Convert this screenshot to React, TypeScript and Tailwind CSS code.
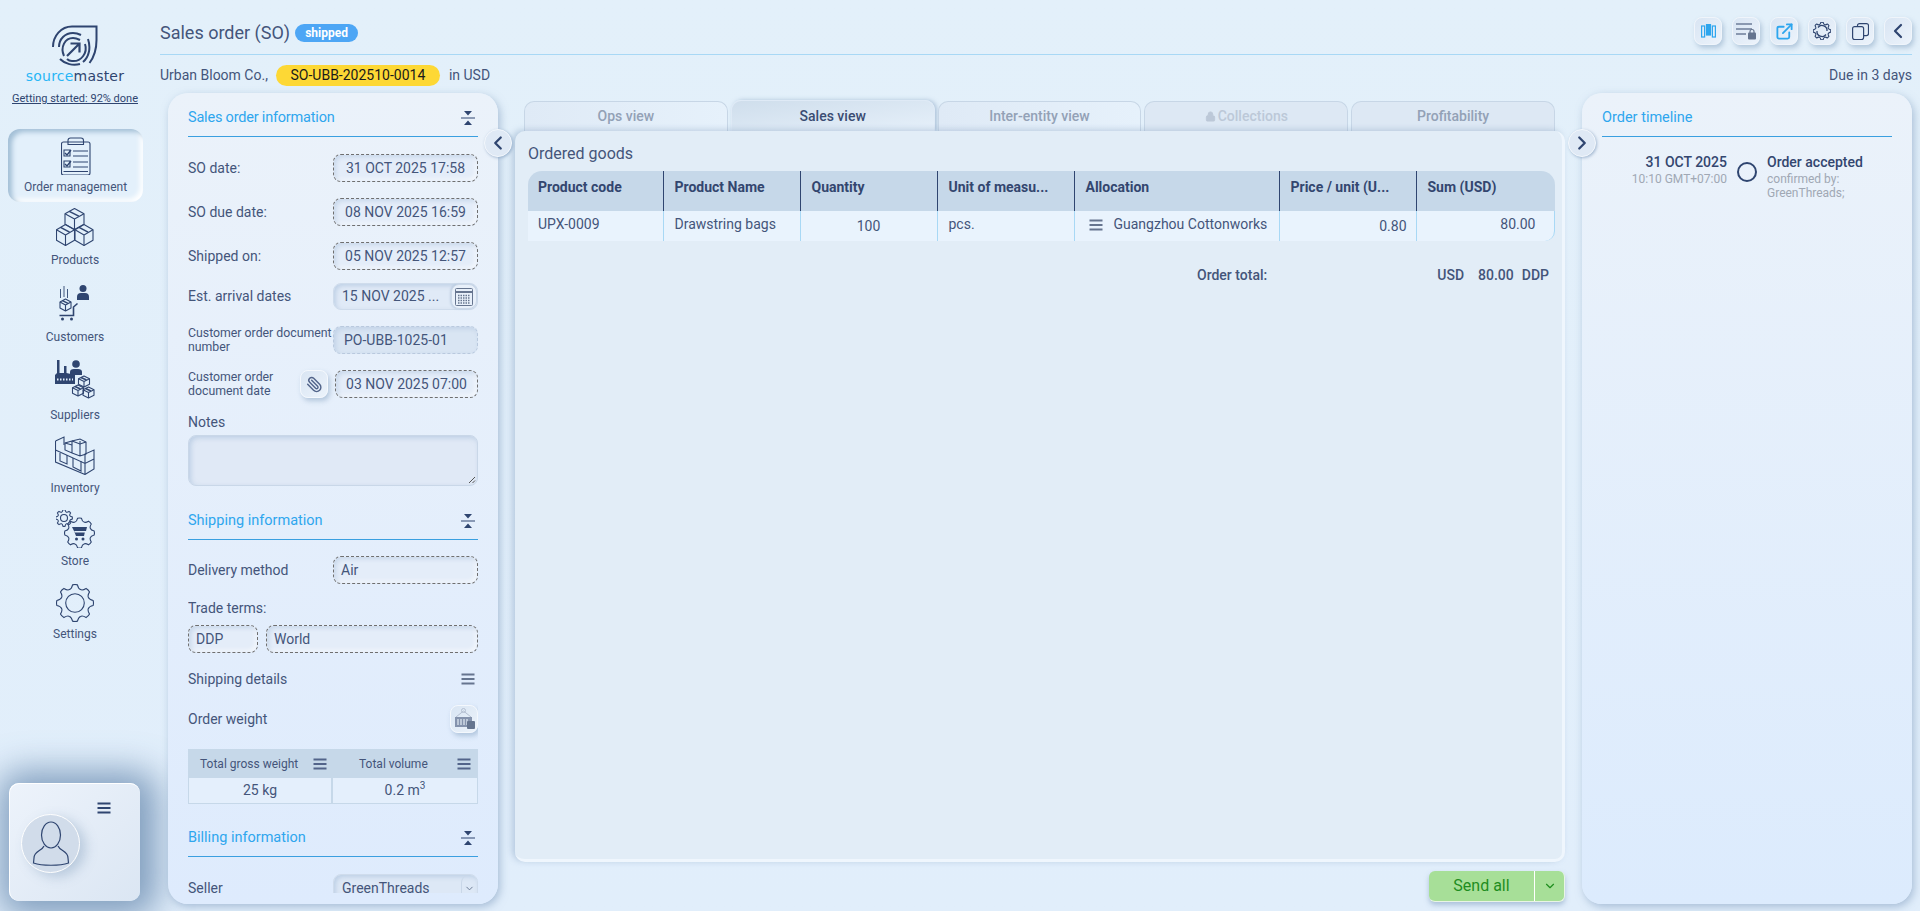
import React from "react";
import { ChevronDown, ChevronLeft, ChevronRight, ExternalLink, Lock, Paperclip } from "lucide-react";

const INK = "#2f4570";

function gearPath(cx: number, cy: number, r: number, R: number, n: number) {
  const step = (Math.PI * 2) / n;
  let d = "";
  for (let i = 0; i < n; i++) {
    const a = i * step - Math.PI / 2;
    const p = (ang: number, rad: number) =>
      `${(cx + Math.cos(ang) * rad).toFixed(2)} ${(cy + Math.sin(ang) * rad).toFixed(2)}`;
    d += `${i === 0 ? "M" : "L"}${p(a - step * 0.5, r)} `;
    d += `Q${p(a - step * 0.3, r)} ${p(a - step * 0.17, R)} `;
    d += `Q${p(a, R * 1.03)} ${p(a + step * 0.17, R)} `;
    d += `Q${p(a + step * 0.3, r)} ${p(a + step * 0.5, r)} `;
  }
  return d + "Z";
}

// isometric carton, cx is the middle and y the top tip
const IsoBox = ({ cx, y, w, h }: { cx: number; y: number; w: number; h: number }) => {
  const q = h / 4;
  return (
    <g fill="none" stroke={INK} strokeWidth="1.1" strokeLinejoin="round">
      <path d={`M${cx} ${y}L${cx + w} ${y + q}V${y + h - q}L${cx} ${y + h}L${cx - w} ${y + h - q}V${y + q}Z`} />
      <path d={`M${cx - w} ${y + q}L${cx} ${y + 2 * q}L${cx + w} ${y + q}M${cx} ${y + 2 * q}V${y + h}`} />
      <path d={`M${cx - w * 0.55} ${y + q * 0.55}L${cx + w * 0.45} ${y + q * 1.45}`} strokeWidth="1.6" />
    </g>
  );
};

const Burger = ({ className = "", color = "#66758f" }: { className?: string; color?: string }) => (
  <svg width="14" height="12" viewBox="0 0 14 12" className={className}>
    <path d="M0.5 1.5H13.5M0.5 6H13.5M0.5 10.5H13.5" stroke={color} strokeWidth="2" />
  </svg>
);

const CollapseIcon = () => (
  <svg width="14" height="14" viewBox="0 0 14 14">
    <path d="M3 0H11L7 4.5ZM0 6.5H14V7.5H0ZM7 9.5L11 14H3Z" fill={INK} />
  </svg>
);

const Logo = () => (
  <svg width="46" height="41" viewBox="0 0 46 41" fill="none" stroke={INK} strokeWidth="2">
    <path d="M1 22C1 11 9 1.500 20 1.500H44.500V15C44.500 24 42 32 37.500 38" />
    <path d="M7 22C7 14 13 8 21 8C24 8 27 9 29 10" />
    <path d="M36 14C39 23 37 32 31 37M8 34C13 39 21 41 28 39" />
    <path d="M12 31C8 22 13 13 21 13C24 13 26 14 28 15M33 19C36 28 29 37 20 36C18 36 16 35 15 34" />
    <path d="M15 31L27 19M18.500 18.500H27.500V27.500" strokeWidth="2.200" />
  </svg>
);

const ClipboardIcon = () => (
  <svg width="30" height="38" viewBox="0 0 30 38" fill="none" stroke={INK} strokeWidth="1.100">
    <rect x="0.500" y="5" width="28.500" height="33" rx="2" />
    <path d="M7 7.500V3.500Q7 1 9.500 1H20Q22.500 1 22.500 3.500V7.500Z" />
    <path d="M3 13H9V19H3ZM3 24H9V30H3ZM12 14H27M12 19H27M12 25H27M12 30H27M2.500 34.500H27" />
    <path d="M4 16L6 18L10 13M4 27L6 29L10 24" strokeWidth="1.400" />
  </svg>
);

const ProductsIcon = () => (
  <svg width="38" height="38" viewBox="0 0 38 38">
    <IsoBox cx={18.5} y={0.5} w={9.5} h={21} />
    <IsoBox cx={9.5} y={16.500} w={9} h={21} />
    <IsoBox cx={28} y={16.500} w={9} h={21} />
  </svg>
);

const CustomersIcon = () => (
  <svg width="31" height="37" viewBox="0 0 31 37" fill="none" stroke={INK}>
    <circle cx="24" cy="3.500" r="3.500" fill={INK} stroke="none" />
    <path d="M18 15V12Q18 8 22 8H26Q30 8 30 12V15Z" fill={INK} stroke="none" />
    <path d="M1.500 4V13M5 1V12M8.500 4V13" strokeWidth="0.900" />
    <IsoBox cx={6.500} y={14} w={5.500} h={12} />
    <path d="M18.500 18.500L14.500 22V30.500H0.500" strokeWidth="1.600" />
    <circle cx="3.500" cy="34" r="1.500" fill={INK} stroke="none" />
    <circle cx="12.500" cy="34" r="1.500" fill={INK} stroke="none" />
  </svg>
);

const SuppliersIcon = () => (
  <svg width="40" height="39" viewBox="0 0 40 39">
    <path d="M0 24V15L2 13V0H4.500V13H9V6H11.500V13L20 15V24Z" fill={INK} />
    <path d="M2 19.500H18" stroke="#e3f0fb" strokeWidth="2" strokeDasharray="1.500 1.500" />
    <circle cx="21" cy="4" r="3.800" fill={INK} />
    <path d="M15 15V12Q15 9 19 9H23Q27 9 27 12V15Z" fill={INK} />
    <IsoBox cx={29} y={16} w={5.500} h={11} />
    <IsoBox cx={23} y={25} w={5.500} h={11} />
    <IsoBox cx={33.500} y={27} w={5.500} h={11} />
  </svg>
);

const InventoryIcon = () => (
  <svg width="40" height="39" viewBox="0 0 40 39" fill="none" stroke={INK} strokeWidth="1.100">
    <path d="M0.500 5V26L30 38.500L39 33V14L30 18V38.500M0.500 5L9 1V9M0.500 14L30 27.500L39 23" />
    <path d="M10 7L17 5V17L10 14ZM17 5L25 3L31 6V18L25 20L17 17M25 5V20" />
    <path d="M5 17V25L12 28V19M18 22V31L26 35V25" />
    <path d="M10 7L17 9M17 5L25 8L31 6" />
  </svg>
);

const StoreIcon = () => (
  <svg width="39" height="38" viewBox="0 0 39 38" fill="none" stroke={INK} strokeWidth="1.100">
    <path d={gearPath(8, 8, 6.300, 8.300, 8)} />
    <circle cx="8" cy="8" r="3.500" />
    <path d={gearPath(23.500, 23, 11.800, 14.800, 8)} />
    <path d="M16 17H31L30 21H18ZM19 22.500H28.800L28 26H20L16.500 17" fill={INK} stroke="none" />
    <circle cx="20.500" cy="29" r="1.500" fill={INK} stroke="none" />
    <circle cx="27" cy="29" r="1.500" fill={INK} stroke="none" />
  </svg>
);

const SettingsIcon = () => (
  <svg width="38" height="38" viewBox="0 0 38 38" fill="none" stroke={INK} strokeWidth="1.100">
    <path d={gearPath(19, 19, 14.500, 18.300, 8)} />
    <circle cx="19" cy="19" r="9.300" />
  </svg>
);

const nav = [
  { label: "Products", icon: <ProductsIcon />, box: "mt-[6px]", text: "mt-[6px]" },
  { label: "Customers", icon: <CustomersIcon />, box: "mt-[17px]", text: "mt-[7px]" },
  { label: "Suppliers", icon: <SuppliersIcon />, box: "mt-[15px]", text: "mt-[8px]" },
  { label: "Inventory", icon: <InventoryIcon />, box: "mt-[13px]", text: "mt-[5px]" },
  { label: "Store", icon: <StoreIcon />, box: "mt-[14px]", text: "mt-[5px]" },
  { label: "Settings", icon: <SettingsIcon />, box: "mt-[15px]", text: "mt-[4px]" },
];

const Sidebar = () => (
  <aside className="relative w-[160px] shrink-0 h-full">
    <div className="flex flex-col items-center pr-[10px]">
      <div className="mt-[25px] h-[41px]">
        <Logo />
      </div>
      <div className="mt-[1px] font-['DejaVu_Sans',sans-serif] text-[14px] leading-[18px] font-medium tracking-[0.2px]">
        <span className="text-[#29b6f6]">source</span>
        <span className="text-[#2f4570]">master</span>
      </div>
      <a className="mt-[6px] text-[11px] leading-[16px] text-[#2f4570] underline whitespace-nowrap">
        Getting started: 92% done
      </a>
    </div>
    <div className="mt-[22px] ml-[8px] w-[135px] h-[73px] rounded-[12px] flex flex-col items-center pt-[8px] bg-[#e3f0fb] shadow-[inset_4px_3px_5px_#a3bfd6,inset_-3px_-3px_5px_#ffffff]">
      <ClipboardIcon />
      <div className="mt-[4px] text-[12px] leading-[16px] text-[#44557a] whitespace-nowrap">Order management</div>
    </div>
    <nav className="flex flex-col items-center pr-[10px]">
      {nav.map((n) => (
        <div key={n.label} className={`flex flex-col items-center ${n.box}`}>
          {n.icon}
          <div className={`text-[12px] leading-[16px] text-[#44557a] ${n.text}`}>{n.label}</div>
        </div>
      ))}
    </nav>
    <div className="absolute left-[9px] top-[783px] w-[131px] h-[118px] rounded-[10px] border-t border-l border-white bg-linear-to-br from-[#edf3fb] to-[#dbe6f3] shadow-[4px_2px_34px_14px_rgba(90,125,165,0.7)]">
      <Burger className="absolute left-[87px] top-[18px]" color={INK} />
      <div className="absolute left-[11px] top-[30px] w-[59px] h-[59px] rounded-full bg-[#d1dcea] border border-white flex items-center justify-center shadow-[6px_4px_12px_rgba(110,140,175,0.35)]">
        <svg width="38" height="45" viewBox="0 0 38 45" fill="none" stroke={INK} strokeWidth="1.200">
          <ellipse cx="19" cy="14" rx="9.500" ry="13" />
          <path d="M12 25C10 30 2 30 2 37L1.500 42C10 45 28 45 36.500 42L36 37C36 30 28 30 26 25" />
        </svg>
      </div>
    </div>
  </aside>
);

const SectionHead = ({ title, icon = true, tight = false }: { title: string; icon?: boolean; tight?: boolean }) => (
  <div className="flex items-center justify-between h-[36px] pb-[2px] border-b border-[#3a9fe0] pr-[3px]">
    <span className={`text-[14.500px] text-[#2ea6ee] ${tight ? "tracking-[-0.2px]" : ""}`}>{title}</span>
    {icon && <CollapseIcon />}
  </div>
);

const Dashed = ({ children, className = "" }: { children: React.ReactNode; className?: string }) => (
  <div
    className={`h-[28px] flex items-center rounded-[8px] border border-dashed border-[#6f6f6f] text-[14px] text-[#44557a] bg-[#e4edf9] shadow-[inset_2px_2px_4px_rgba(160,185,215,0.4),inset_-2px_-2px_4px_rgba(255,255,255,0.6)] whitespace-nowrap ${className}`}
  >
    {children}
  </div>
);

const DateRow = ({ label, value, className }: { label: string; value: string; className: string }) => (
  <div className={`flex items-center justify-between ${className}`}>
    <span className="text-[14px] text-[#44557a]">{label}</span>
    <Dashed className="w-[145px] justify-center">{value}</Dashed>
  </div>
);

const raised =
  "flex items-center justify-center w-[28px] h-[28px] rounded-[8px] bg-linear-to-br from-[#d9e5f3] to-[#ecf3fb] border border-[#f4f8fd] shadow-[2px_3px_5px_rgba(120,150,185,0.45)]";

const LeftPanel = () => (
  <section className="relative w-[330px] shrink-0 h-[811px] rounded-[20px] bg-linear-to-b from-[#ebf2fa] to-[#deebfd] shadow-[2px_3px_8px_rgba(120,150,185,0.55)] px-[20px] pt-[8px]">
    <div className="h-[792px] overflow-hidden">
      <SectionHead title="Sales order information" tight />
      <DateRow label="SO date:" value="31 OCT 2025 17:58" className="mt-[17px]" />
      <DateRow label="SO due date:" value="08 NOV 2025 16:59" className="mt-[16px]" />
      <DateRow label="Shipped on:" value="05 NOV 2025 12:57" className="mt-[16px]" />
      <div className="flex items-center justify-between mt-[13px]">
        <span className="text-[14px] text-[#44557a]">Est. arrival dates</span>
        <div className="relative w-[145px] h-[27px] rounded-[8px] border border-[#cfdcec] flex items-center pl-[8px] text-[14px] text-[#44557a] bg-[#e0eaf7] shadow-[inset_2px_2px_4px_rgba(160,185,215,0.5)] whitespace-nowrap">
          15 NOV 2025 ...
          <div className="absolute right-0 top-0 w-[26px] h-[25px] rounded-[8px] border border-[#cbd8e8] bg-[#e8f0fa] shadow-[-1px_0_2px_rgba(120,150,185,0.3)] flex items-center justify-center">
            <svg width="18" height="18" viewBox="0 0 18 18" fill="none" stroke="#66758f">
              <rect x="0.500" y="0.500" width="17" height="17" rx="1" />
              <path d="M0.500 4H17.500" strokeWidth="2" />
              <path d="M3 7.500H15M3 10H15M3 12.500H15M3 15H15" strokeDasharray="1.500 1" strokeWidth="1.300" />
            </svg>
          </div>
        </div>
      </div>
      <div className="flex items-center justify-between mt-[16px]">
        <span className="text-[12.300px] leading-[14px] text-[#44557a] w-[145px]">Customer order document number</span>
        <div className="w-[145px] h-[28px] flex items-center pl-[10px] rounded-[8px] border border-dashed border-[#b9c9de] text-[14px] text-[#44557a] bg-[#d9e5f3] shadow-[inset_2px_2px_4px_rgba(160,185,215,0.4)]">
          PO-UBB-1025-01
        </div>
      </div>
      <div className="flex items-center mt-[16px]">
        <span className="text-[12.300px] leading-[14px] text-[#44557a] w-[112px]">Customer order document date</span>
        <div className={raised}>
          <Paperclip size={17} color="#52648a" className="-scale-x-100" />
        </div>
        <Dashed className="w-[143px] ml-[7px] justify-center">03 NOV 2025 07:00</Dashed>
      </div>
      <div className="mt-[15px] text-[14px] leading-[18px] text-[#44557a]">Notes</div>
      <div className="relative mt-[4px] h-[51px] rounded-[8px] border border-[#c9d7e8] bg-[#e0e9f6] shadow-[inset_2px_2px_5px_rgba(160,185,215,0.55)]">
        <svg width="8" height="8" viewBox="0 0 8 8" className="absolute right-[1px] bottom-[1px]" stroke="#555">
          <path d="M1 7L7 1M4.500 7L7 4.500" />
        </svg>
      </div>
      <div className="mt-[18px]">
        <SectionHead title="Shipping information" />
      </div>
      <div className="flex items-center justify-between mt-[16px]">
        <span className="text-[14px] text-[#44557a]">Delivery method</span>
        <Dashed className="w-[145px] pl-[7px]">Air</Dashed>
      </div>
      <div className="mt-[15px] text-[14px] leading-[18px] text-[#44557a]">Trade terms:</div>
      <div className="flex gap-[8px] mt-[8px]">
        <Dashed className="w-[70px] pl-[7px]">DDP</Dashed>
        <Dashed className="flex-1 pl-[7px]">World</Dashed>
      </div>
      <div className="flex items-center justify-between mt-[16px] h-[20px] pr-[3px]">
        <span className="text-[14px] text-[#44557a]">Shipping details</span>
        <Burger />
      </div>
      <div className="flex items-center justify-between mt-[16px]">
        <span className="text-[14px] text-[#44557a]">Order weight</span>
        <div className={raised}>
          <svg width="21" height="22" viewBox="0 0 21 22" fill="#8593ad" stroke="none">
            <path d="M2 9L9.500 3L17 9" fill="none" stroke="#b4bfd1" />
            <circle cx="9.500" cy="2.500" r="2" fill="none" stroke="#b4bfd1" />
            <path d="M1 9H18V19H1Z" />
            <path d="M4 11V17M7 11V17M10 11V17M13 11V17" stroke="#e3ebf6" strokeWidth="1.200" />
            <rect x="13" y="13" width="8" height="8" rx="1" fill="#66758f" />
          </svg>
        </div>
      </div>
      <div className="mt-[16px] border-x border-b border-[#c6d8e9] text-[12px] text-[#44557a]">
        <div className="grid grid-cols-2 h-[29px] bg-[#c6d8e9]">
          <div className="flex items-center pl-[11px] pr-[6px] justify-between">
            Total gross weight
            <Burger color="#52648a" />
          </div>
          <div className="flex items-center pr-[6px] justify-between pl-[26px]">
            Total volume
            <Burger color="#52648a" />
          </div>
        </div>
        <div className="grid grid-cols-2 h-[25px] text-[14px] bg-[#e4effc]">
          <div className="flex items-center justify-center border-r-2 border-[#c6d8e9]">25 kg</div>
          <div className="flex items-center justify-center">
            0.2 m<sup className="text-[10px]">3</sup>
          </div>
        </div>
      </div>
      <div className="mt-[17px]">
        <SectionHead title="Billing information" />
      </div>
      <div className="flex items-start justify-between mt-[17px]">
        <span className="text-[14px] text-[#44557a] mt-[4px]">Seller</span>
        <div className="relative w-[145px] h-[28px] rounded-[8px] border border-[#cfdcec] flex items-center pl-[8px] text-[14px] text-[#44557a] bg-[#dde8f6] shadow-[inset_2px_2px_4px_rgba(160,185,215,0.5)]">
          GreenThreads
          <div className="absolute right-0 top-0 w-[16px] h-[26px] rounded-[8px] border-l border-[#c9d7e8] flex items-center justify-center">
            <ChevronDown size={11} color="#66758f" />
          </div>
        </div>
      </div>
    </div>
    <button className="absolute right-[-14px] top-[36px] w-[28px] h-[28px] rounded-full bg-[#dfe9f5] border border-[#f4f8fd] shadow-[1px_1px_3px_rgba(120,150,185,0.6)] flex items-center justify-center z-10">
      <ChevronLeft size={22} color={INK} strokeWidth={2.500} />
    </button>
  </section>
);

const tabs = [
  { label: "Ops view", cls: "text-[#93a1b6] bg-linear-to-r from-[#dfeaf6] to-[#e6f1fb] border-[#c7d6e6]" },
  {
    label: "Sales view",
    cls: "text-[#3a4c72] bg-linear-to-br from-[#cfdeec] to-[#e6f0fa] border-[#dfeaf6] -mt-[1px] shadow-[2px_0_4px_rgba(120,150,185,0.5)]",
  },
  { label: "Inter-entity view", cls: "text-[#93a1b6] bg-linear-to-r from-[#dfeaf6] to-[#e6f1fb] border-[#c7d6e6]" },
  {
    label: "Collections",
    lock: true,
    cls: "text-[#bcc8d8] bg-[#dde8f4] border-[#c7d6e6]",
  },
  { label: "Profitability", cls: "text-[#93a1b6] bg-[#dde8f4] border-[#c7d6e6]" },
];

const cols = "grid grid-cols-[135.5px_137px_137px_137px_205px_137px_138px]";
const heads = ["Product code", "Product Name", "Quantity", "Unit of measu...", "Allocation", "Price / unit (U...", "Sum (USD)"];

const MainPanel = () => (
  <div className="flex-1 min-w-0 ml-[17px] mr-[17px] flex flex-col">
    <div className="flex gap-[3px] mt-[8px] pl-[9px] pr-[10px] h-[30px]">
      {tabs.map((t) => (
        <div
          key={t.label}
          className={`flex-1 flex items-center justify-center gap-[2px] rounded-t-[10px] border border-b-0 text-[14px] font-medium ${t.cls}`}
        >
          {t.lock && <Lock size={11} fill="#bcc8d8" />}
          {t.label}
        </div>
      ))}
    </div>
    <section className="h-[731px] bg-[#e2edf7] rounded-[10px] border-b-[3px] border-r-[3px] border-[#eff6fd] shadow-[-3px_-1px_6px_rgba(120,150,185,0.4)] pl-[13px] pr-[7px] pt-[12px]">
      <h2 className="text-[16px] leading-[22px] text-[#44557a]">Ordered goods</h2>
      <div className="mt-[6px] text-[14px] text-[#44557a]">
        <div className={`${cols} h-[40px] bg-[#c6d8e9] rounded-t-[14px] font-bold text-[#33466f]`}>
          {heads.map((h, i) => (
            <div key={h} className={`flex items-center pb-[8px] border-[#2f4570] ${i < 6 ? "border-r" : ""} ${i === 0 ? "pl-[10px]" : "pl-[11px]"}`}>
              {h}
            </div>
          ))}
        </div>
        <div className={`${cols} h-[30px] bg-[#e9f3fd] rounded-br-[10px] border-r border-[#a8d8f5]`}>
          <div className="flex items-center pb-[3px] pl-[10px] border-r border-[#a8d8f5]">UPX-0009</div>
          <div className="flex items-center pb-[3px] pl-[11px] border-r border-[#a8d8f5]">Drawstring bags</div>
          <div className="flex items-center justify-center border-r border-[#a8d8f5]">100</div>
          <div className="flex items-center pb-[3px] pl-[11px] border-r border-[#a8d8f5]">pcs.</div>
          <div className="flex items-center pb-[3px] pl-[14px] gap-[11px] border-r border-[#a8d8f5]">
            <Burger />
            Guangzhou Cottonworks
          </div>
          <div className="flex items-center justify-end pr-[9px] border-r border-[#a8d8f5]">0.80</div>
          <div className="flex items-center justify-end pb-[3px] pr-[19px]">80.00</div>
        </div>
      </div>
      <div className="flex items-center mt-[24px] text-[14px] leading-[20px] text-[#44557a] whitespace-nowrap pr-[6px]">
        <span className="ml-[669px] font-medium shrink-0">Order total:</span>
        <span className="ml-auto font-medium">USD</span>
        <span className="ml-[14px] font-medium">80.00</span>
        <span className="ml-[8px] font-medium">DDP</span>
      </div>
    </section>
    <div className="flex justify-end mt-[9px]">
      <div className="flex h-[31px] w-[136px] rounded-[6px] bg-[#a7df98] border-b border-r border-[#e8f5e5] shadow-[0_3px_5px_rgba(120,150,185,0.5)] text-[#1f8d1f] text-[16px]">
        <div className="flex-1 flex items-center justify-center border-r border-white">Send all</div>
        <div className="w-[29px] flex items-center justify-center">
          <ChevronDown size={14} color="#1f8d1f" />
        </div>
      </div>
    </div>
  </div>
);

const RightPanel = () => (
  <section className="relative w-[330px] shrink-0 h-[811px] rounded-[20px] bg-linear-to-b from-[#ebf2fa] to-[#dcebfd] shadow-[2px_3px_8px_rgba(120,150,185,0.55)] px-[20px] pt-[8px]">
    <SectionHead title="Order timeline" icon={false} />
    <div className="flex mt-[15px]">
      <div className="w-[125px] text-right">
        <div className="text-[14px] leading-[20px] font-medium text-[#33466f]">31 OCT 2025</div>
        <div className="text-[12px] leading-[14px] text-[#a0a8b4] whitespace-nowrap">10:10 GMT+07:00</div>
      </div>
      <div className="w-[40px] flex justify-center pt-[10px]">
        <div className="w-[20px] h-[20px] rounded-full border-2 border-[#2f4570]" />
      </div>
      <div>
        <div className="text-[14px] leading-[20px] font-medium text-[#33466f]">Order accepted</div>
        <div className="text-[12px] leading-[14px] text-[#a0a8b4]">confirmed by:</div>
        <div className="text-[12px] leading-[14px] text-[#a0a8b4]">GreenThreads;</div>
      </div>
    </div>
    <button className="absolute left-[-14px] top-[36px] w-[28px] h-[28px] rounded-full bg-[#dfe9f5] border border-[#f4f8fd] shadow-[1px_1px_3px_rgba(120,150,185,0.6)] flex items-center justify-center z-10">
      <ChevronRight size={22} color={INK} strokeWidth={2.500} />
    </button>
  </section>
);

const topBtn =
  "flex items-center justify-center w-[28px] h-[28px] rounded-[8px] bg-linear-to-br from-[#d9e5f3] to-[#ecf3fb] border border-[#f0f5fb] shadow-[2px_3px_5px_rgba(120,150,185,0.45)]";

const TopBar = () => (
  <header className="h-[55px] flex items-center justify-between border-b border-[#a8d8f5]">
    <div className="flex items-center gap-[5px] mt-[11px]">
      <h1 className="text-[18px] text-[#44557a]">Sales order (SO)</h1>
      <span className="h-[18px] px-[10px] rounded-full bg-[#4da6f5] text-white text-[12px] font-bold flex items-center">shipped</span>
    </div>
    <div className="flex gap-[10px] mt-[8px]">
      <div className={topBtn}>
        <svg width="15" height="14" viewBox="0 0 15 14" fill="none" stroke="#2ea6ee" strokeWidth="1.200">
          <rect x="0.600" y="2" width="3" height="11" />
          <rect x="5.500" y="0" width="4" height="11" fill="#2ea6ee" />
          <rect x="11.400" y="2" width="3" height="11" />
        </svg>
      </div>
      <div className={topBtn}>
        <svg width="20" height="18" viewBox="0 0 20 18" fill="none" stroke="#8a98b0" strokeWidth="2">
          <path d="M0 2H16M0 7H16M0 12H10" />
          <rect x="12" y="10.500" width="8" height="7" rx="1" fill="#66758f" stroke="none" />
          <path d="M14 11V9.500A2 2 0 0 1 18 9.500V11" stroke="#66758f" strokeWidth="1.200" />
        </svg>
      </div>
      <div className={topBtn}>
        <ExternalLink size={19} color="#2ea6ee" strokeWidth={2.300} />
      </div>
      <div className={topBtn}>
        <svg width="18" height="18" viewBox="0 0 18 18" fill="none" stroke={INK} strokeWidth="1.100">
          <path d={gearPath(9, 9, 6.800, 8.700, 8)} />
          <path d="M5 5.500A5 5 0 0 1 14 9M13 12.500A5 5 0 0 1 4 9" strokeWidth="1.300" />
        </svg>
      </div>
      <div className={topBtn}>
        <svg width="17" height="17" viewBox="0 0 17 17" fill="none" stroke={INK} strokeWidth="1.200">
          <rect x="5.500" y="0.600" width="11" height="12" rx="2" />
          <rect x="0.600" y="3.600" width="11" height="13" rx="2" fill="#e3edf8" />
        </svg>
      </div>
      <div className={topBtn}>
        <ChevronLeft size={24} color={INK} strokeWidth={2.200} />
      </div>
    </div>
  </header>
);

export default function App() {
  return (
    <div className="flex w-[1920px] h-[911px] overflow-hidden bg-linear-to-b from-[#e3f0fa] to-[#e1eefb] font-['Roboto',sans-serif]">
      <Sidebar />
      <main className="flex-1 min-w-0 pr-[8px] flex flex-col">
        <TopBar />
        <div className="h-[38px] pt-[2px] flex items-center text-[14px] text-[#44557a]">
          <span>Urban Bloom Co.,</span>
          <span className="ml-[8px] w-[164px] h-[21px] rounded-full bg-[#fdd835] text-[#1a1a1a] flex items-center justify-center">SO-UBB-202510-0014</span>
          <span className="ml-[9px]">in USD</span>
          <span className="ml-auto">Due in 3 days</span>
        </div>
        <div className="flex pl-[8px]">
          <LeftPanel />
          <MainPanel />
          <RightPanel />
        </div>
      </main>
    </div>
  );
}
